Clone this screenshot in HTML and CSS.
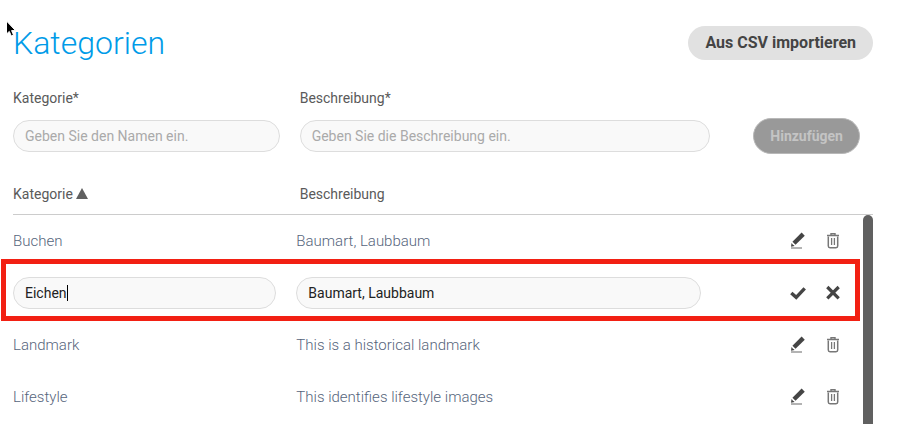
FILE: index.html
```html
<!DOCTYPE html>
<html lang="de">
<head>
<meta charset="utf-8">
<meta name="viewport" content="width=device-width, initial-scale=1">
<title>Kategorien</title>
<link rel="stylesheet" href="styles.css">
</head>
<body>
<svg class="defs" aria-hidden="true">
  <symbol id="icon-edit" viewBox="0 0 16 18">
    <path d="M4 11.300L13.200 2.100" stroke="#454545" stroke-width="4.400" fill="none"/>
    <path d="M1.500 11L4.600 14.100L1 14.800Z" fill="#454545"/>
    <path d="M2.400 11.600L3.700 12.900" stroke="#fff" stroke-width="1"/>
    <path d="M1 16H12" stroke="#808080" stroke-width="1.200"/>
  </symbol>
  <symbol id="icon-delete" viewBox="0 0 14 18">
    <g fill="none" stroke="#777">
      <path d="M1 3.500H13" stroke-width="1.500"/>
      <path d="M5 3V1.800H9V3" stroke-width="1.400"/>
      <path d="M2.300 4.500V14Q2.300 15.700 4 15.700H10Q11.700 15.700 11.700 14V4.500" stroke-width="1.500"/>
      <path d="M5.600 6V13M8.400 6V13" stroke-width="1.300"/>
    </g>
  </symbol>
  <symbol id="icon-accept" viewBox="0 0 16 18">
    <path d="M1.300 9L6.200 13.300L14.700 4.300" fill="none" stroke="#454545" stroke-width="3.400"/>
  </symbol>
  <symbol id="icon-cancel" viewBox="0 0 14 18">
    <path d="M1.300 3L12.700 14.400M12.700 3L1.300 14.400" fill="none" stroke="#454545" stroke-width="3.200"/>
  </symbol>
</svg>
<main class="page">
  <header class="page-header">
    <h1>Kategorien</h1>
    <button type="button" class="button">Aus CSV importieren</button>
  </header>

  <form class="columns new-category">
    <div class="field">
      <label for="new-name">Kategorie*</label>
      <input class="input" id="new-name" type="text" placeholder="Geben Sie den Namen ein.">
    </div>
    <div class="field">
      <label for="new-description">Beschreibung*</label>
      <input class="input" id="new-description" type="text" placeholder="Geben Sie die Beschreibung ein.">
    </div>
    <div class="submit">
      <button type="submit" class="button button-add" disabled>Hinzufügen</button>
    </div>
  </form>

  <table class="categories">
    <thead>
      <tr class="columns">
        <th scope="col" aria-sort="ascending">Kategorie <svg class="sort" viewBox="0 0 12 11" aria-hidden="true"><path d="M6 0L12 11H0Z" fill="#606060"/></svg></th>
        <th scope="col">Beschreibung</th>
      </tr>
    </thead>
    <tbody>
      <tr class="columns">
        <td>Buchen</td>
        <td>Baumart, Laubbaum</td>
        <td class="actions">
          <button type="button" aria-label="Bearbeiten"><svg class="wide"><use href="#icon-edit"/></svg></button>
          <button type="button" aria-label="Löschen"><svg><use href="#icon-delete"/></svg></button>
        </td>
      </tr>
      <tr class="columns editing">
        <td><div class="edit-field"><input class="input" type="text" value="Eichen" aria-label="Kategorie"><span class="caret"></span></div></td>
        <td><input class="input" type="text" value="Baumart, Laubbaum" aria-label="Beschreibung"></td>
        <td class="actions">
          <button type="button" aria-label="Speichern"><svg class="wide"><use href="#icon-accept"/></svg></button>
          <button type="button" aria-label="Abbrechen"><svg><use href="#icon-cancel"/></svg></button>
        </td>
      </tr>
      <tr class="columns">
        <td>Landmark</td>
        <td>This is a historical landmark</td>
        <td class="actions">
          <button type="button" aria-label="Bearbeiten"><svg class="wide"><use href="#icon-edit"/></svg></button>
          <button type="button" aria-label="Löschen"><svg><use href="#icon-delete"/></svg></button>
        </td>
      </tr>
      <tr class="columns">
        <td>Lifestyle</td>
        <td>This identifies lifestyle images</td>
        <td class="actions">
          <button type="button" aria-label="Bearbeiten"><svg class="wide"><use href="#icon-edit"/></svg></button>
          <button type="button" aria-label="Löschen"><svg><use href="#icon-delete"/></svg></button>
        </td>
      </tr>
    </tbody>
  </table>
</main>
<svg class="pointer" viewBox="0 0 12 18" aria-hidden="true"><path d="M1.500 1V14L4.300 11.400L6.300 16L8.500 15L6.600 10.600H10.500Z" fill="#000" stroke="#fff" stroke-width="1"/></svg>
</body>
</html>
```
FILE: styles.css
```css
* {
  box-sizing: border-box;
}

body {
  margin: 0;
  height: 100vh;
  overflow: hidden;
  background: #fff;
  color: #5a5a5a;
  font-family: Roboto, "Liberation Sans", sans-serif;
  font-size: 14px;
  line-height: 20px;
}

.defs {
  display: none;
}

.page {
  display: flex;
  flex-direction: column;
  height: 100%;
  padding: 22px 24px 0 13px;
}

.page-header {
  display: flex;
  align-items: center;
  justify-content: space-between;
  height: 42px;
}

h1 {
  margin: 0;
  color: #009be8;
  font-size: 32px;
  font-weight: 300;
  line-height: 40px;
}

.button {
  height: 34px;
  padding: 0 17px;
  border: 0;
  border-radius: 17px;
  background: #e1e1e1;
  color: #444;
  font: 700 16px/20px Roboto, "Liberation Sans", sans-serif;
}

.button-add {
  height: 36px;
  padding: 0 16px;
  border: 1px solid #b8b8b8;
  border-radius: 18px;
  background: #999;
  color: #c4c4c4;
  font-size: 14px;
}

.columns {
  display: grid;
  grid-template-columns: 2fr 3fr 1fr;
}

.new-category {
  align-items: end;
  margin-top: 24px;
}

.field {
  display: flex;
  flex-direction: column;
  gap: 12px;
  padding-right: 20px;
}

.submit {
  display: flex;
  justify-content: flex-end;
  padding-right: 13px;
  margin-bottom: -2px;
}

.input {
  width: 100%;
  height: 32px;
  padding: 0 11px;
  border: 1px solid #ddd;
  border-radius: 16px;
  background: #f9f9f9;
  color: #222;
  font: 400 14px/20px Roboto, "Liberation Sans", sans-serif;
}

.input::placeholder {
  color: #aaa;
}

.categories {
  display: flex;
  flex: 1;
  flex-direction: column;
  min-height: 0;
  margin-top: 32px;
}

thead {
  display: block;
  padding-bottom: 10px;
  border-bottom: 1px solid #ccc;
}

th {
  padding: 0;
  font-weight: 400;
  text-align: left;
}

.sort {
  width: 12px;
  height: 11px;
}

tbody {
  display: block;
  flex: 1;
  position: relative;
  min-height: 0;
  padding-right: 10px;
}

/* scroll thumb, reaching past the lower edge of the window */
tbody::after {
  content: "";
  position: absolute;
  top: 0;
  right: 0;
  bottom: -12px;
  width: 10px;
  border-radius: 5px;
  background: #606060;
}

tbody tr {
  align-items: center;
  height: 52px;
}

td {
  padding: 0 20px 0 0;
  color: #56657c;
  font-size: 15px;
  font-weight: 300;
}

.actions {
  display: flex;
  align-items: center;
  justify-content: flex-end;
  gap: 20px;
  padding-right: 23px;
}

.actions button {
  display: flex;
  padding: 0;
  border: 0;
  background: none;
}

.actions svg {
  width: 14px;
  height: 18px;
}

.actions .wide {
  width: 16px;
}

.editing {
  position: relative;
}

.editing::after {
  content: "";
  position: absolute;
  inset: -8px 3px -2px -12px;
  border: 5px solid #f22013;
  pointer-events: none;
}

.edit-field {
  position: relative;
}

.caret {
  position: absolute;
  top: 8px;
  left: 54px;
  width: 1px;
  height: 16px;
  background: #000;
}

.pointer {
  position: absolute;
  top: 20px;
  left: 5px;
  width: 12px;
  height: 18px;
}
```
